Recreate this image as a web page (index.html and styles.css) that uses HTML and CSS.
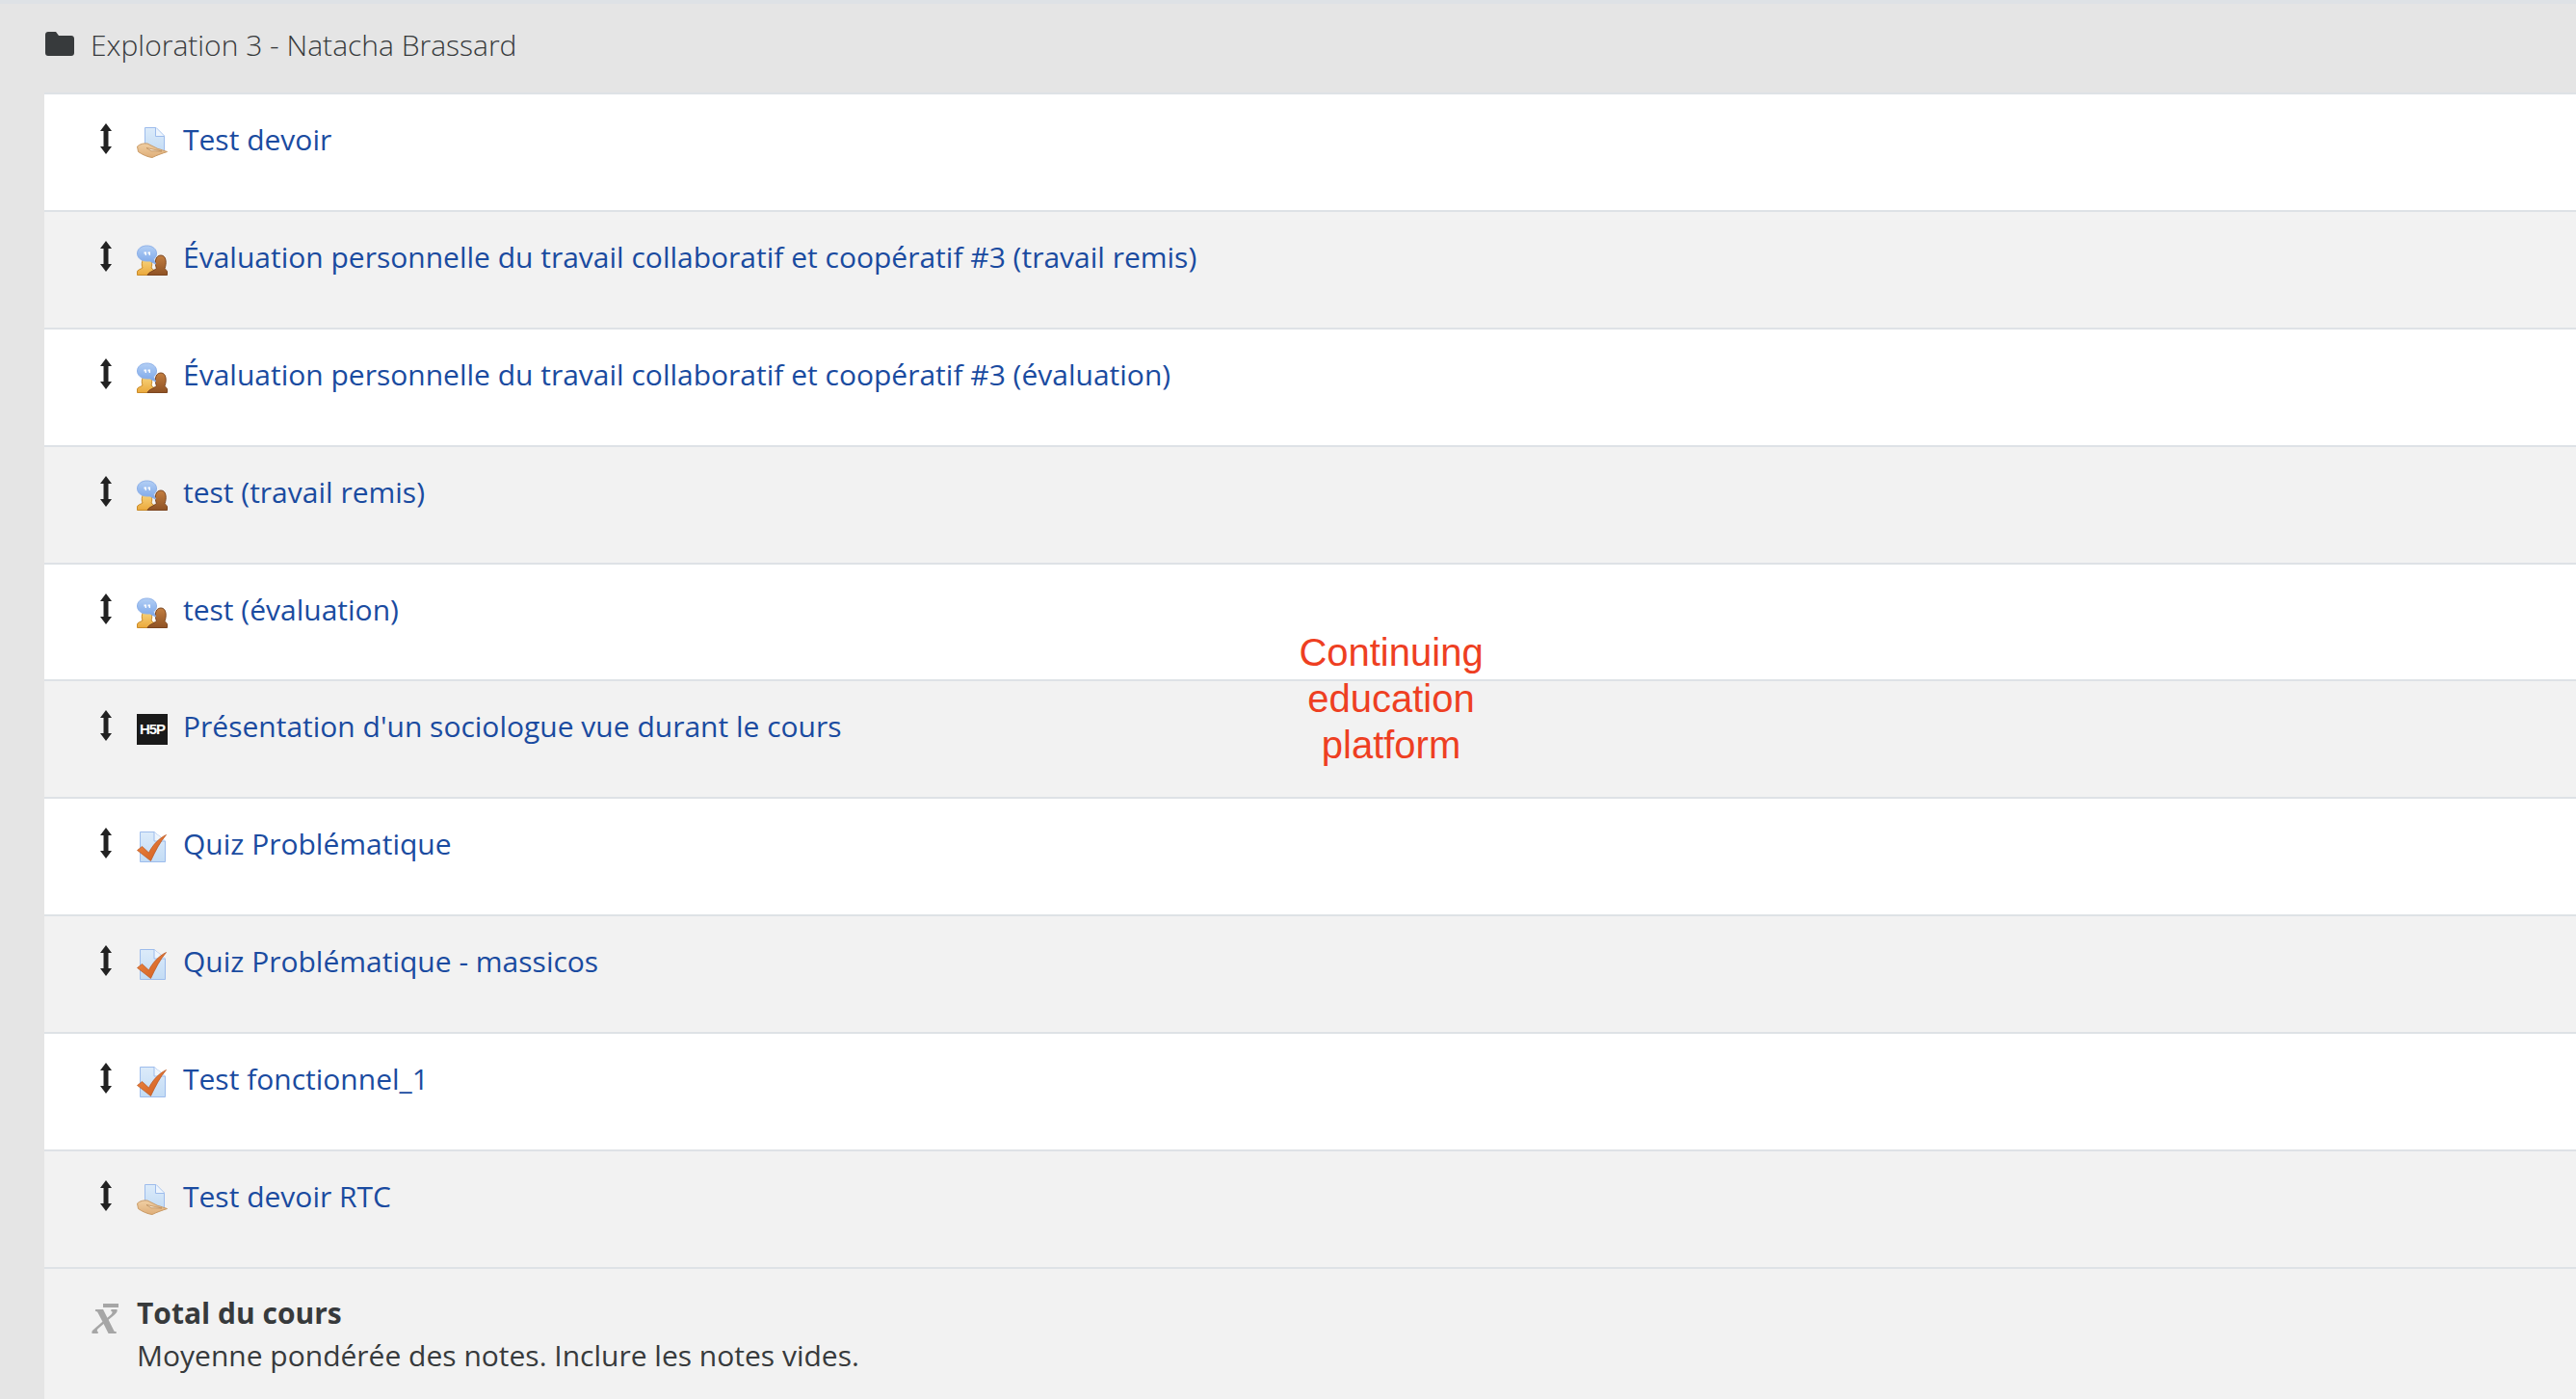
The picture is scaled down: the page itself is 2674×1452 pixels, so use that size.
FILE: index.html
```html
<!DOCTYPE html>
<html lang="fr">
<head>
<meta charset="utf-8">
<title>Exploration 3 - Natacha Brassard</title>
<link rel="stylesheet" href="styles.css">
</head>
<body>
<svg class="sprite" width="0" height="0" aria-hidden="true">
  <defs>
    <linearGradient id="paper" x1="0" y1="0" x2="0" y2="1"><stop offset="0" stop-color="#dcebfa"/><stop offset="1" stop-color="#c3dcf5"/></linearGradient>
    <linearGradient id="skin" x1="0" y1="0" x2="0" y2="1"><stop offset="0" stop-color="#f0cfa4"/><stop offset="1" stop-color="#dfae78"/></linearGradient>
    <linearGradient id="gold" x1="0" y1="0" x2="0" y2="1"><stop offset="0" stop-color="#f8d884"/><stop offset="1" stop-color="#eba93c"/></linearGradient>
    <linearGradient id="brown" x1="0" y1="0" x2="0" y2="1"><stop offset="0" stop-color="#c37f41"/><stop offset="1" stop-color="#8f5224"/></linearGradient>
    <linearGradient id="bubble" x1="0" y1="0" x2="0" y2="1"><stop offset="0" stop-color="#b3cff5"/><stop offset="1" stop-color="#7ba6e8"/></linearGradient>
    <linearGradient id="tick" x1="0" y1="0" x2="1" y2="1"><stop offset="0" stop-color="#ee8a45"/><stop offset="1" stop-color="#cf5a1e"/></linearGradient>
    <symbol id="i-move" viewBox="0 0 12 32">
      <path d="M6 0 12 8H8.500V24H12L6 32 0 24H3.500V8H0Z" fill="#222"/>
    </symbol>
    <symbol id="i-assign" viewBox="0 0 32 32">
      <path d="M8.500.500H20L28.500 9V25H8.500Z" fill="url(#paper)" stroke="#9dbcec"/>
      <path d="M19.500.500V9.500H28.500" fill="#eef5fd" stroke="#9dbcec"/>
      <path d="M.5 20C3 17.500 7 16.500 11 17L22 22.500C25 23 28 24.500 31.500 25.500C27 27 21 29 16 31.500C11 31 5 28 1.500 25.500Z" fill="url(#skin)" stroke="#c99a66"/>
      <path d="M10 21.500 26 25 15 24.800Z" fill="#f7e6cf" stroke="#b98a58" stroke-width=".7"/>
    </symbol>
    <symbol id="i-work" viewBox="0 0 32 32">
      <path d="M.5 31.500V28C.5 26 4 25.500 6 24C4.500 21 5 13 10.500 13C16 13 16.500 21 15 24C16.500 25.500 17.500 26 18.500 27V31.500Z" fill="url(#gold)" stroke="#c98b2a"/>
      <path d="M11 31.500C12.500 28 17.500 27.500 20.500 24.500C18.500 20 18.500 11 25 11C31 11 31 20 29 24.500C30 26 31.500 27 31.500 28V31.500Z" fill="url(#brown)" stroke="#7c4620"/>
      <path d="M10.500 1C16.500 1 20.500 4.500 20.500 9C20.500 11.500 19.500 13.500 17.500 15L19.500 20 13.500 17H10.500C4.500 17 .5 13.500 .5 9C.5 4.500 4.500 1 10.500 1Z" fill="url(#bubble)" stroke="#8db0e8"/>
      <path d="M7.500 7.500H10V11H8.500L9 9.500H7.500ZM11.500 7.500H14V11H12.500L13 9.500H11.500Z" fill="#fff"/>
    </symbol>
    <symbol id="i-quiz" viewBox="0 0 32 32">
      <path d="M3.500.500H18L29.500 10V31.500H3.500Z" fill="url(#paper)" stroke="#9dbcec"/>
      <path d="M18 .500V10H29.500" fill="#eef5fd" stroke="#9dbcec"/>
      <path d="M.5 19.500 5.500 15.500 12.500 22C16.500 14 23 7 30.500 3.500C24 11 19.500 20 14.500 30.500Z" fill="url(#tick)" stroke="#b9551e" stroke-width=".7"/>
    </symbol>
  </defs>
</svg>
<main class="page">
  <header class="section-head">
    <svg class="folder" viewBox="0 0 30 25" aria-hidden="true"><path d="M3 0H11L14 4H27C28.700 4 30 5.300 30 7V22C30 23.700 28.700 25 27 25H3C1.300 25 0 23.700 0 22V3C0 1.300 1.300 0 3 0Z" fill="#373a3c"/></svg>
    <h1 class="section-title">Exploration 3 - Natacha Brassard</h1>
  </header>
  <div class="list">
    <div class="row">
      <svg class="move"><use href="#i-move"/></svg>
      <svg class="mod"><use href="#i-assign"/></svg>
      <a class="link" href="#">Test devoir</a>
    </div>
    <div class="row">
      <svg class="move"><use href="#i-move"/></svg>
      <svg class="mod"><use href="#i-work"/></svg>
      <a class="link" href="#">Évaluation personnelle du travail collaboratif et coopératif #3 (travail remis)</a>
    </div>
    <div class="row">
      <svg class="move"><use href="#i-move"/></svg>
      <svg class="mod"><use href="#i-work"/></svg>
      <a class="link" href="#">Évaluation personnelle du travail collaboratif et coopératif #3 (évaluation)</a>
    </div>
    <div class="row">
      <svg class="move"><use href="#i-move"/></svg>
      <svg class="mod"><use href="#i-work"/></svg>
      <a class="link" href="#">test (travail remis)</a>
    </div>
    <div class="row">
      <svg class="move"><use href="#i-move"/></svg>
      <svg class="mod"><use href="#i-work"/></svg>
      <a class="link" href="#">test (évaluation)</a>
    </div>
    <div class="row">
      <svg class="move"><use href="#i-move"/></svg>
      <span class="h5p">H5P</span>
      <a class="link" href="#">Présentation d'un sociologue vue durant le cours</a>
    </div>
    <div class="row">
      <svg class="move"><use href="#i-move"/></svg>
      <svg class="mod"><use href="#i-quiz"/></svg>
      <a class="link" href="#">Quiz Problématique</a>
    </div>
    <div class="row">
      <svg class="move"><use href="#i-move"/></svg>
      <svg class="mod"><use href="#i-quiz"/></svg>
      <a class="link" href="#">Quiz Problématique - massicos</a>
    </div>
    <div class="row">
      <svg class="move"><use href="#i-move"/></svg>
      <svg class="mod"><use href="#i-quiz"/></svg>
      <a class="link" href="#">Test fonctionnel_1</a>
    </div>
    <div class="row">
      <svg class="move"><use href="#i-move"/></svg>
      <svg class="mod"><use href="#i-assign"/></svg>
      <a class="link" href="#">Test devoir RTC</a>
    </div>
    <div class="total">
      <span class="xbar">x</span>
      <div class="total-text">
        <strong class="total-title">Total du cours</strong>
        <span>Moyenne pondérée des notes. Inclure les notes vides.</span>
      </div>
    </div>
  </div>
</main>
<div class="note">Continuing<br>education<br>platform</div>
</body>
</html>
```
FILE: styles.css
```css
* { box-sizing: border-box; }
html, body { margin: 0; height: 100%; }
body {
  position: relative;
  height: 1452px;
  overflow: hidden;
  background: #e5e5e5;
  color: #373a3c;
  font: 400 30px/45px "Open Sans", "Liberation Sans", sans-serif;
}
.sprite { position: absolute; }
.page { border-top: 4px solid #dee2e6; }
.section-head {
  display: flex;
  align-items: center;
  gap: 17px;
  height: 92px;
  padding: 0 0 8px 47px;
}
.folder { width: 30px; height: 25px; flex: none; margin-top: -2px; }
.section-title { margin: 0; font: 300 30px/45px "Open Sans", sans-serif; }
.list { margin-left: 46px; border-top: 2px solid #dee2e6; }
.row {
  display: flex;
  align-items: flex-start;
  height: 121.900px;
  padding: 24px 0 0 58px;
  background: #fff;
  border-bottom: 2px solid #dee2e6;
}
.row:nth-child(even) { background: #f2f2f2; }
.move { width: 12px; height: 32px; flex: none; margin-top: 6px; }
.mod { width: 32px; height: 32px; flex: none; margin: 10px 16px 0 26px; }
.h5p {
  flex: none;
  width: 32px;
  height: 32px;
  margin: 10px 16px 0 26px;
  background: #1a1a1a;
  color: #fff;
  font: 700 15px/32px "Liberation Sans", sans-serif;
  letter-spacing: -1px;
  text-align: center;
}
.link { color: #1a4ba0; text-decoration: none; }
.total {
  display: flex;
  align-items: flex-start;
  height: 140px;
  padding: 24px 0 0 50px;
  background: #f2f2f2;
  line-height: 44px;
}
.xbar {
  position: relative;
  width: 46px;
  margin-top: 3px;
  flex: none;
  color: #a6a6a6;
  font: italic 700 54px/45px "Liberation Serif", serif;
}
.xbar::before {
  content: "";
  position: absolute;
  left: 11px;
  top: 9px;
  width: 16px;
  height: 4px;
  background: #a6a6a6;
}
.total-text { display: flex; flex-direction: column; }
.total-title { font-weight: 700; }
.note {
  position: absolute;
  left: 1294px;
  top: 653px;
  width: 300px;
  color: #ee3f22;
  font: 400 40px/48px "Liberation Sans", sans-serif;
  text-align: center;
}
```
